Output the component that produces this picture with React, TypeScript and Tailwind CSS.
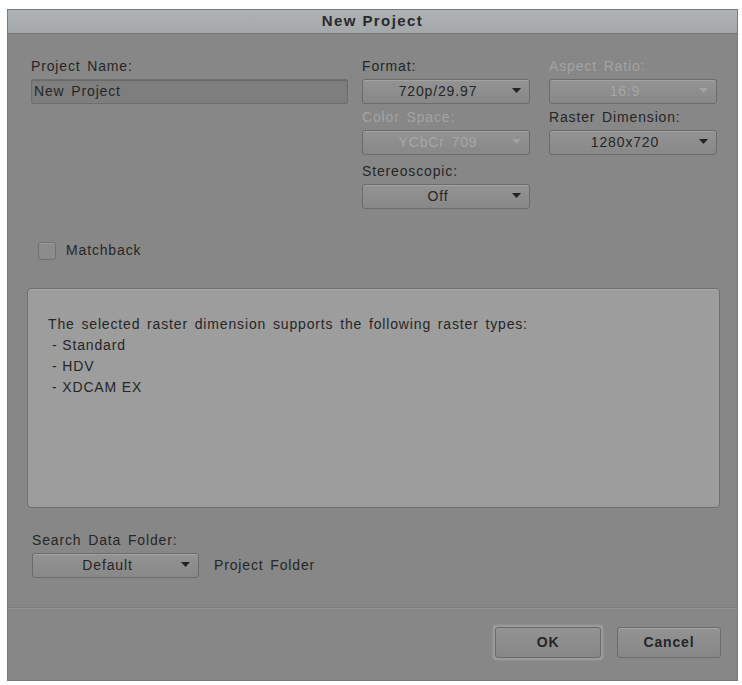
import React from "react";

const Arrow = ({ disabled }: { disabled?: boolean }) => (
  <svg width="9" height="6" viewBox="0 0 9 6" className="absolute right-[8px] top-[8px]">
    <path d="M0 0 L9 0 L4.5 5 Z" fill={disabled ? "#a2a2a2" : "#222222"} />
  </svg>
);

function Dropdown({ value, disabled, className = "" }: { value: string; disabled?: boolean; className?: string }) {
  return (
    <div
      className={`relative h-[25px] rounded-[3px] border border-[#6b6b6b] bg-gradient-to-b from-[#939393] to-[#888888] shadow-[inset_0_1px_0_#a3a3a3] flex items-center justify-center pr-[16px] ${className}`}
    >
      <span className={disabled ? "text-[#a6a6a6]" : "text-[#262626]"}>{value}</span>
      <Arrow disabled={disabled} />
    </div>
  );
}

function Label({ children, disabled }: { children: React.ReactNode; disabled?: boolean }) {
  return (
    <div className={`h-[16px] leading-[16px] mb-[5px] ${disabled ? "text-[#a3a3a3]" : "text-[#262626]"}`}>{children}</div>
  );
}

export default function App() {
  return (
    <div
      className="w-[742px] h-[685px] bg-white pl-[7px] pt-[9px]"
      style={{ fontFamily: '"Liberation Sans", Arial, sans-serif' }}
    >
      <div className="w-[731px] h-[672px] flex flex-col border border-[#7a7a7a] bg-[#878787] text-[14px] tracking-[0.85px] [word-spacing:2px]">
        {/* title bar */}
        <div className="h-[24px] shrink-0 bg-gradient-to-b from-[#aeb2b5] to-[#a4a8ab] border-b border-[#747474] flex items-center justify-center">
          <span className="font-bold text-[15px] tracking-[1.4px] [word-spacing:0px] text-[#2a2a2a]">New Project</span>
        </div>

        {/* body */}
        <div className="flex-1 flex flex-col pt-[24px] pl-[23px] pr-[17px]">
          <div className="flex">
            <div className="w-[317px]">
              <Label>Project Name:</Label>
              <div className="h-[25px] rounded-[2px] border border-[#6e6e6e] bg-[#7e7e7e] shadow-[inset_0_1px_1px_#6a6a6a] flex items-center pl-[2px] text-[#262626]">
                New Project
              </div>
            </div>
            <div className="w-[168px] ml-[14px]">
              <Label>Format:</Label>
              <Dropdown value="720p/29.97" />
              <div className="mt-[5px]">
                <Label disabled>Color Space:</Label>
                <Dropdown value="YCbCr 709" disabled />
              </div>
              <div className="mt-[8px]">
                <Label>Stereoscopic:</Label>
                <Dropdown value="Off" />
              </div>
            </div>
            <div className="w-[168px] ml-[19px]">
              <Label disabled>Aspect Ratio:</Label>
              <Dropdown value="16:9" disabled />
              <div className="mt-[5px]">
                <Label>Raster Dimension:</Label>
                <Dropdown value="1280x720" />
              </div>
            </div>
          </div>

          <div className="flex items-center mt-[31px] ml-[7px]">
            <div className="w-[18px] h-[18px] rounded-[3px] border border-[#717171] bg-[#8c8c8c] shadow-[inset_0_1px_0_#9c9c9c]" />
            <span className="ml-[10px] text-[#262626]">Matchback</span>
          </div>

          <div className="mt-[27px] -ml-[4px] h-[220px] rounded-[4px] border border-[#6f6f6f] bg-[#9d9d9d] shadow-[inset_0_1px_0_#a9a9a9] pl-[20px] pt-[25px] text-[#262626] leading-[21px]">
            <div>The selected raster dimension supports the following raster types:</div>
            <div className="pl-[4px] [word-spacing:0px]">- Standard</div>
            <div className="pl-[4px] [word-spacing:0px]">- HDV</div>
            <div className="pl-[4px] [word-spacing:0px]">- XDCAM EX</div>
          </div>

          <div className="mt-[24px] ml-[1px]">
            <Label>Search Data Folder:</Label>
            <div className="flex items-center">
              <Dropdown value="Default" className="w-[167px]" />
              <span className="ml-[15px] text-[#262626]">Project Folder</span>
            </div>
          </div>
        </div>

        {/* footer */}
        <div className="h-[73px] shrink-0 border-t border-[#7c7c7c] shadow-[inset_0_1px_0_#959595] flex items-start justify-end pr-[16px] pt-[17px]">
          <div className="rounded-[4px] p-[2px] bg-[#9a9a9a] shadow-[0_0_2px_#a5a5a5]">
            <div className="w-[106px] h-[31px] rounded-[3px] border border-[#6b6b6b] bg-gradient-to-b from-[#939393] to-[#878787] flex items-center justify-center font-bold text-[#262626]">
              OK
            </div>
          </div>
          <div className="ml-[14px] mt-[2px] w-[104px] h-[31px] rounded-[3px] border border-[#6b6b6b] bg-gradient-to-b from-[#939393] to-[#878787] shadow-[inset_0_1px_0_#a5a5a5] flex items-center justify-center font-bold text-[#262626]">
            Cancel
          </div>
        </div>
      </div>
    </div>
  );
}
